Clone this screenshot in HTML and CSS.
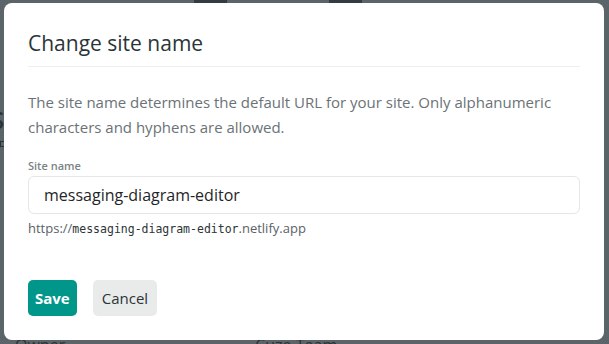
FILE: index.html
```html
<!DOCTYPE html>
<html lang="en">
<head>
    <meta charset="UTF-8">
    <meta name="viewport" content="width=device-width, initial-scale=1.0">
    <title>Change site name</title>
    <link rel="stylesheet" href="styles.css">
</head>
<body>
    <div class="page">
        <div class="page-top">
            <span class="tab"></span>
            <span class="tab"></span>
        </div>
        <div class="page-side">
            <span class="big-s">S</span>
            <span class="small-box"></span>
        </div>
        <div class="page-bottom">
            <span class="col">Owner</span>
            <span class="col">Cuze Team</span>
        </div>
    </div>

    <div class="overlay">
        <div class="modal">
            <h2 class="modal-title">Change site name</h2>
            <p class="modal-text">The site name determines the default URL for your site. Only alphanumeric characters and hyphens are allowed.</p>
            <label class="field-label" for="site-name">Site name</label>
            <input id="site-name" class="field-input" type="text" value="messaging-diagram-editor">
            <div class="field-hint">https://<code>messaging-diagram-editor</code>.netlify.app</div>
            <div class="actions">
                <button class="btn btn-primary">Save</button>
                <button class="btn btn-secondary">Cancel</button>
            </div>
        </div>
    </div>
</body>
</html>
```

FILE: styles.css
```css
* {
    margin: 0;
    padding: 0;
    box-sizing: border-box;
}
html, body {
    width: 100%;
    height: 100%;
}
body {
    font-family: "Open Sans", "Noto Sans", sans-serif;
    background-color: #5b6569;
    overflow: hidden;
}

/* page behind the dialog */
.page {
    height: 100%;
    display: flex;
    flex-direction: column;
}
.page-top {
    display: flex;
    gap: 102px;
    padding-left: 194px;
    height: 3px;
}
.tab {
    width: 33px;
    height: 3px;
    background-color: #323c42;
}
.page-side {
    display: flex;
    flex-direction: column;
    margin-top: 104px;
}
.big-s {
    font-size: 24px;
    font-weight: 600;
    line-height: 26px;
    color: #2a3236;
    margin-left: -9px;
}
.small-box {
    width: 6px;
    height: 6px;
    border: 1px solid #2a3236;
    margin-top: 8px;
}
.page-bottom {
    margin-top: auto;
    display: flex;
    gap: 190px;
    padding-left: 15px;
    height: 4px;
    overflow: hidden;
}
.col {
    font-size: 16px;
    color: #2a3236;
    line-height: 10px;
}

/* dialog */
.overlay {
    position: absolute;
    inset: 0;
}
.modal {
    position: absolute;
    left: 4px;
    top: 3px;
    width: 600px;
    height: 337px;
    background: #fff;
    border-radius: 8px;
    padding: 24px 24px;
    display: flex;
    flex-direction: column;
}
.modal-title {
    font-size: 21px;
    font-weight: 400;
    color: #2b3437;
    line-height: 30px;
    padding-top: 1px;
    padding-bottom: 8px;
    border-bottom: 1px solid #eeeff0;
}
.modal-text {
    margin-top: 23px;
    font-size: 15px;
    line-height: 25px;
    color: #6b7276;
}
.field-label {
    margin-top: 19px;
    font-size: 11px;
    font-weight: 600;
    color: #7c8386;
    line-height: 14px;
}
.field-input {
    margin-top: 3px;
    height: 38px;
    border: 1px solid #e4e6e7;
    border-radius: 6px;
    padding: 0 15px;
    font-family: inherit;
    font-size: 16px;
    font-weight: 500;
    color: #1f2629;
    outline: none;
}
.field-hint {
    margin-top: 5px;
    font-size: 13px;
    color: #5a6265;
    line-height: 18px;
}
.field-hint code {
    font-family: "DejaVu Sans Mono", "Liberation Mono", monospace;
    font-size: 11.5px;
    color: #2b3437;
}
.actions {
    margin-top: auto;
    display: flex;
    gap: 16px;
}
.btn {
    height: 36px;
    border: none;
    border-radius: 5px;
    font-family: inherit;
    font-size: 15px;
}
.btn-primary {
    padding: 0 7px;
    background-color: #00968a;
    color: #fff;
    font-weight: 700;
}
.btn-secondary {
    padding: 0 9px;
    background-color: #e9ebeb;
    color: #2b3437;
    font-weight: 400;
}
```
